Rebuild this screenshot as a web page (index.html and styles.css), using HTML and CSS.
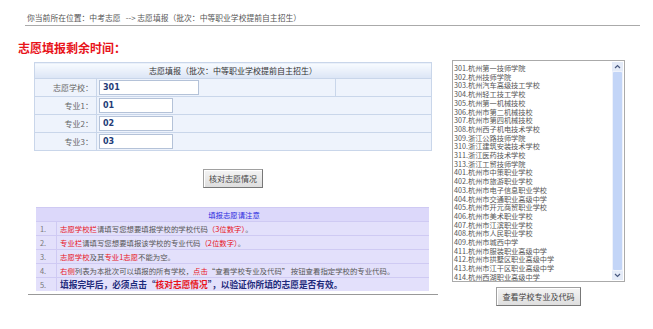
FILE: index.html
```html
<!DOCTYPE html>
<html lang="zh-CN">
<head>
    <meta charset="UTF-8">
    <title>志愿填报</title>
    <link rel="stylesheet" href="styles.css">
</head>
<body>

<div class="crumb">你当前所在位置：中考志愿 &nbsp;&nbsp;--&gt; 志愿填报（批次：中等职业学校提前自主招生）</div>

<div class="main">
    <div class="left">
        <h2 class="timer">志愿填报剩余时间：</h2>

        <!-- 志愿表 -->
        <table class="form-table">
            <tr class="head"><td colspan="3">志愿填报（批次：中等职业学校提前自主招生）</td></tr>
            <tr>
                <td class="lbl">志愿学校：</td>
                <td class="val"><input class="inp wide" type="text" value="301"></td>
                <td class="extra"></td>
            </tr>
            <tr>
                <td class="lbl">专业1：</td>
                <td class="val" colspan="2"><input class="inp" type="text" value="01"></td>
            </tr>
            <tr>
                <td class="lbl">专业2：</td>
                <td class="val" colspan="2"><input class="inp" type="text" value="02"></td>
            </tr>
            <tr>
                <td class="lbl">专业3：</td>
                <td class="val" colspan="2"><input class="inp" type="text" value="03"></td>
            </tr>
        </table>

        <div class="btn-row"><button class="btn check">核对志愿情况</button></div>

        <!-- 注意事项 -->
        <table class="notes">
            <tr class="head"><td colspan="2">填报志愿请注意</td></tr>
            <tr><td class="no">1.</td><td><span class="red">志愿学校栏</span>请填写您想要填报学校的学校代码<span class="red">（3位数字）</span>。</td></tr>
            <tr><td class="no">2.</td><td><span class="red">专业栏</span>请填写您想要填报该学校的专业代码<span class="red">（2位数字）</span>。</td></tr>
            <tr><td class="no">3.</td><td><span class="red">志愿学校</span>及其<span class="red">专业1志愿</span>不能为空。</td></tr>
            <tr><td class="no">4.</td><td><span class="red">右侧</span>列表为本批次可以填报的所有学校，<span class="red">点击</span>“查看学校专业及代码” 按钮查看指定学校的专业代码。</td></tr>
            <tr><td class="no">5.</td><td class="strong">填报完毕后，必须点击“<span class="red">核对志愿情况</span>”，以验证你所填的志愿是否有效。</td></tr>
        </table>
        <div class="rule"></div>
    </div>

    <div class="right">
        <div class="listbox">
            <div class="items">
                <div>301.杭州第一技师学院</div>
                <div>302.杭州技师学院</div>
                <div>303.杭州汽车高级技工学校</div>
                <div>304.杭州轻工技工学校</div>
                <div>305.杭州第一机械技校</div>
                <div>306.杭州市第二机械技校</div>
                <div>307.杭州市第四机械技校</div>
                <div>308.杭州西子机电技术学校</div>
                <div>309.浙江公路技师学院</div>
                <div>310.浙江建筑安装技术学校</div>
                <div>311.浙江医药技术学校</div>
                <div>313.浙江工贸技师学院</div>
                <div>401.杭州市中策职业学校</div>
                <div>402.杭州市旅游职业学校</div>
                <div>403.杭州市电子信息职业学校</div>
                <div>404.杭州市交通职业高级中学</div>
                <div>405.杭州市开元商贸职业学校</div>
                <div>406.杭州市美术职业学校</div>
                <div>407.杭州市江滨职业学校</div>
                <div>408.杭州市人民职业学校</div>
                <div>409.杭州市城西中学</div>
                <div>411.杭州市服装职业高级中学</div>
                <div>412.杭州市拱墅区职业高级中学</div>
                <div>413.杭州市江干区职业高级中学</div>
                <div>414.杭州西湖职业高级中学</div>
            </div>
            <div class="scroll">
                <div class="arrow">
                    <svg width="7" height="5" viewBox="0 0 7 5"><path d="M1 4 L3.5 1.5 L6 4" fill="none" stroke="#4a5a80" stroke-width="1.2"/></svg>
                </div>
                <div class="thumb"></div>
                <div class="arrow">
                    <svg width="7" height="5" viewBox="0 0 7 5"><path d="M1 1 L3.5 3.5 L6 1" fill="none" stroke="#4a5a80" stroke-width="1.2"/></svg>
                </div>
            </div>
        </div>
        <div class="btn-row"><button class="btn view">查看学校专业及代码</button></div>
    </div>
</div>

</body>
</html>
```

FILE: styles.css
```css
body {
    margin: 0;
    background: #fff;
    font-family: "Noto Sans CJK SC", "DejaVu Sans", sans-serif;
    font-size: 8px;
    color: #555;
}

.crumb {
    margin: 0 13px 0 25px;
    padding: 13px 0 2px 2px;
    line-height: 10px;
    font-size: 7.8px;
    color: #555;
    border-bottom: 1px solid #aaa;
}

.main {
    display: flex;
}

.left {
    width: 440px;
}

.timer {
    margin: 15px 0 0 18px;
    font-size: 12px;
    line-height: 14px;
    color: #e8131a;
    font-weight: bold;
}

/* 志愿表 */
.form-table {
    margin: 7px 0 0 34px;
    width: 398px;
    border-collapse: collapse;
    background: #eef3fc;
}

.form-table td {
    border: 1px solid #c9d6ea;
    padding: 0;
}

.form-table .head td {
    height: 15px;
    text-align: center;
    color: #333;
    background: linear-gradient(#f8fbff, #dbe5f5);
}

.form-table .lbl {
    width: 58px;
    height: 17px;
    text-align: right;
    padding-right: 3px;
    color: #666;
}

.form-table .val {
    padding-left: 2px;
}

.form-table .extra {
    width: 95px;
}

.inp {
    display: block;
    box-sizing: border-box;
    width: 74px;
    height: 15px;
    margin: 0;
    padding: 0 0 0 3px;
    border: 1px solid #b4c2d8;
    background: #fff;
    font-family: "DejaVu Sans", sans-serif;
    font-size: 8px;
    font-weight: bold;
    color: #243c78;
}

.inp.wide {
    width: 100px;
}

.btn-row {
    display: flex;
    justify-content: center;
}

.btn {
    font-family: "Noto Sans CJK SC", sans-serif;
    font-size: 8px;
    color: #444;
    padding: 0;
    height: 19px;
    background: linear-gradient(#f4f4f4, #dedede);
    border: 1px solid #a0a0a0;
    border-right-color: #777;
    border-bottom-color: #777;
    box-shadow: inset 1px 1px 0 #fff;
}

.left .btn-row {
    margin: 18px 0 0 34px;
    width: 398px;
}

.check {
    width: 60px;
}

/* 注意事项 */
.notes {
    margin: 19px 0 0 36px;
    width: 393px;
    border-collapse: collapse;
    background: #e3e0fb;
    font-size: 7.4px;
}

.notes td {
    height: 13px;
    padding: 0 0 0 3px;
    border-top: 1px solid #cfcaf3;
    line-height: 12px;
    white-space: nowrap;
}

.notes .head td {
    text-align: center;
    color: #2a2ae0;
    background: #dcd8fa;
}

.notes .no {
    width: 16px;
    padding-left: 4px;
    color: #777;
    border-right: 1px solid #cfcaf3;
}

.red {
    color: #e8131a;
}

.notes .strong {
    font-weight: bold;
    font-size: 8.7px;
    color: #1e2a7a;
}

.rule {
    margin: 3px 0 0 28px;
    width: 410px;
    border-top: 1px solid #999;
}

/* 右侧列表 */
.right {
    margin-left: 12px;
    padding-top: 34px;
    width: 173px;
}

.listbox {
    display: flex;
    height: 220px;
    border: 1px solid #aaa;
    background: #fff;
}

.items {
    flex: 1;
    padding: 3px 0 0 1px;
    line-height: 8.7px;
    font-size: 7.2px;
    color: #555;
    white-space: nowrap;
    overflow: hidden;
}

.scroll {
    width: 11px;
    margin: 1px 1px 1px 0;
    display: flex;
    flex-direction: column;
    background: #eef2fb;
}

.arrow {
    height: 9px;
    display: flex;
    align-items: center;
    justify-content: center;
    background: #e4ebf8;
}

.thumb {
    flex: 1;
    margin: 1px 1px;
    background: #c3d5f7;
    border-radius: 1px;
}

.right .btn-row {
    margin-top: 5px;
}

.view {
    width: 85px;
}
```
